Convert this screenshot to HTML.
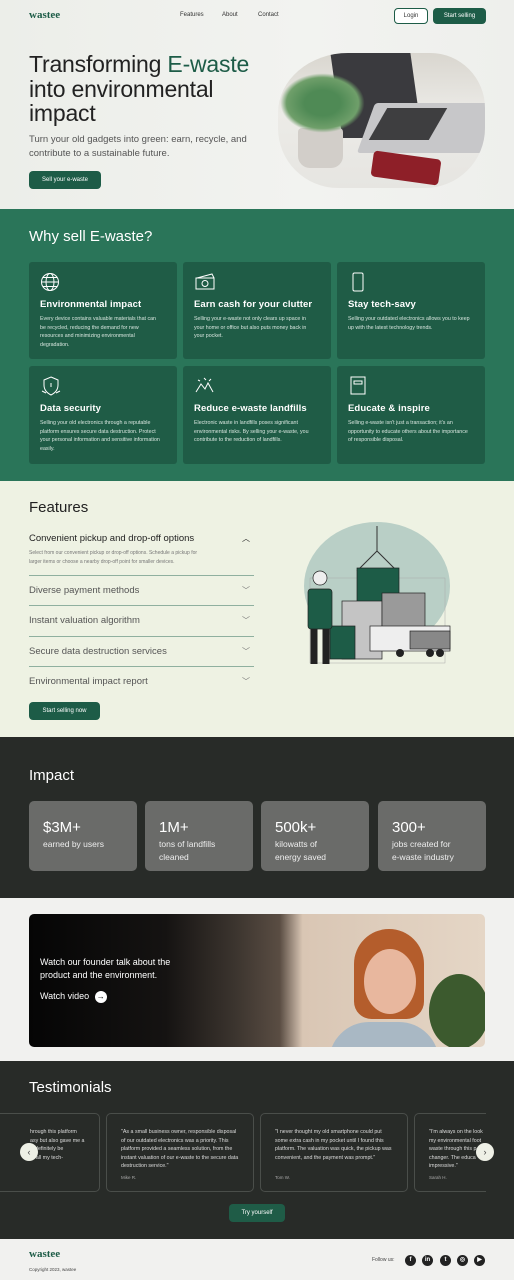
<!DOCTYPE html>
<html><head><meta charset="utf-8">
<style>
*{margin:0;padding:0;box-sizing:border-box}
body{width:514px;height:1280px;font-family:"Liberation Sans",sans-serif;background:#f1f1ef;color:#222;overflow:hidden}
.abs{position:absolute}
section{position:relative;overflow:hidden}
.btn{position:absolute;background:#1d5c47;color:#fff;border-radius:4px;font-size:6px;display:flex;align-items:center;justify-content:center}
.card{position:absolute;background:#1f5c46;border-radius:3px;color:#fff;padding:10px 11px}
.card h3{font-size:9.5px;font-weight:bold;margin-top:27px;letter-spacing:.1px}
.card p{font-size:5.3px;line-height:8.6px;color:#d8e6df;margin-top:5px;padding-right:4px}
.card svg{position:absolute;left:11px;top:10px}
.acc{position:absolute;left:29px;width:225px;font-size:9.5px;color:#555;border-top:1px solid #8fb09f}
.acc span{position:absolute;right:4px;font-size:8px;color:#777}
.stat{position:absolute;top:801px;width:108px;height:70px;background:#6a6b69;border-radius:5px;color:#fff;padding:13px 14px}
.stat b{font-size:15px;font-weight:normal;display:block}
.stat i{font-style:normal;font-size:8.5px;line-height:13px;display:block;color:#eee;margin-top:2px}
.tc{position:absolute;top:1113px;height:79px;border:1px solid #4a4e4a;border-radius:5px;font-size:5.3px;line-height:8.5px;color:#ddd;padding:14px 14px}
.tc .n{position:absolute;top:60px;font-size:4.5px;color:#aaa}
.soc{position:absolute;top:1255px;width:11px;height:11px;border-radius:50%;background:#222;color:#fff;font-size:6px;text-align:center;line-height:11px;font-weight:bold}
</style></head><body>
<section style="height:209px;background:linear-gradient(90deg,#eceee9,#f2f3f0 60%,#eeefec)">
<div class="abs" style="left:29px;top:9px;font-family:'Liberation Serif',serif;font-weight:bold;font-size:11px;color:#1d5c47">wastee</div>
<div class="abs" style="left:180px;top:12px;font-size:6px;color:#333">Features</div>
<div class="abs" style="left:222px;top:12px;font-size:6px;color:#333">About</div>
<div class="abs" style="left:258px;top:12px;font-size:6px;color:#333">Contact</div>
<div class="btn" style="left:394px;top:8px;width:34px;height:16px;background:#fff;color:#333;border:1px solid #1d5c47">Login</div>
<div class="btn" style="left:433px;top:8px;width:53px;height:16px">Start selling</div>
<div class="abs" style="left:29px;top:52px;font-size:23px;line-height:24.5px;color:#222;letter-spacing:-.2px">Transforming <span style="color:#1d5c47">E-waste</span><br>into environmental<br>impact</div>
<div class="abs" style="left:29px;top:133px;font-size:9.5px;line-height:14px;color:#555">Turn your old gadgets into green: earn, recycle, and<br>contribute to a sustainable future.</div>
<div class="btn" style="left:29px;top:171px;width:72px;height:18px">Sell your e-waste</div>
<div class="abs" style="left:278px;top:53px;width:207px;height:135px;border-radius:70px 55px 60px 60px/60px 55px 60px 60px;overflow:hidden;background:linear-gradient(180deg,#d9d6cf 0%,#ecebe7 45%,#e6e5e1 100%)">
 <div class="abs" style="left:58px;top:-5px;width:80px;height:90px;background:#3a3a3e;transform:skewX(8deg)"></div>
 <div class="abs" style="left:88px;top:50px;width:125px;height:50px;background:#c7c7c9;transform:skewX(-20deg);border-radius:3px"></div>
 <div class="abs" style="left:100px;top:55px;width:60px;height:32px;background:#3e3e40;transform:skewX(-30deg)"></div>
 <div class="abs" style="left:20px;top:75px;width:45px;height:40px;background:#d2cec9;border-radius:4px 4px 12px 12px"></div>
 <div class="abs" style="left:2px;top:20px;width:85px;height:60px;background:radial-gradient(ellipse,#4f8a55 30%,#6f9f6a 60%,transparent 70%)"></div>
 <div class="abs" style="left:94px;top:102px;width:68px;height:26px;background:#8e1f28;border-radius:4px;transform:rotate(8deg)"></div>
</div>
</section>
<section style="height:272px;background:#2a7559">
<div class="abs" style="left:29px;top:19px;font-size:15px;color:#fff">Why sell E-waste?</div>
<div class="card" style="left:29px;top:53px;width:148px;height:97px"><svg width="20" height="20" viewBox="0 0 20 20" fill="none" stroke="#fff" stroke-width="1"><circle cx="10" cy="10" r="8.5"/><ellipse cx="10" cy="10" rx="4" ry="8.5"/><path d="M1.5 10h17M3 5.5h14M3 14.5h14"/></svg><h3>Environmental impact</h3><p>Every device contains valuable materials that can be recycled, reducing the demand for new resources and minimizing environmental degradation.</p></div>
<div class="card" style="left:183px;top:53px;width:148px;height:97px"><svg width="22" height="20" viewBox="0 0 22 20" fill="none" stroke="#fff" stroke-width="1"><rect x="2" y="6" width="18" height="11"/><path d="M3 6l15-4 2 4"/><circle cx="11" cy="11.5" r="3"/></svg><h3>Earn cash for your clutter</h3><p>Selling your e-waste not only clears up space in your home or office but also puts money back in your pocket.</p></div>
<div class="card" style="left:337px;top:53px;width:148px;height:97px"><svg width="20" height="20" viewBox="0 0 20 20" fill="none" stroke="#fff" stroke-width="1"><rect x="5" y="1" width="10" height="18" rx="1.5"/></svg><h3>Stay tech-savy</h3><p>Selling your outdated electronics allows you to keep up with the latest technology trends.</p></div>
<div class="card" style="left:29px;top:157px;width:148px;height:98px"><svg width="22" height="20" viewBox="0 0 22 20" fill="none" stroke="#fff" stroke-width="1"><path d="M11 1l7 3v5c0 5-3 8-7 10-4-2-7-5-7-10V4z"/><path d="M11 7v4M2 15l4 2M20 15l-4 2"/></svg><h3>Data security</h3><p>Selling your old electronics through a reputable platform ensures secure data destruction. Protect your personal information and sensitive information easily.</p></div>
<div class="card" style="left:183px;top:157px;width:148px;height:98px"><svg width="22" height="20" viewBox="0 0 22 20" fill="none" stroke="#fff" stroke-width="1"><path d="M2 16l5-8 4 5 3-6 5 9M4 4l2 1M10 2l2 2M17 3l-2 2"/></svg><h3>Reduce e-waste landfills</h3><p>Electronic waste in landfills poses significant environmental risks. By selling your e-waste, you contribute to the reduction of landfills.</p></div>
<div class="card" style="left:337px;top:157px;width:148px;height:98px"><svg width="20" height="20" viewBox="0 0 20 20" fill="none" stroke="#fff" stroke-width="1"><rect x="3" y="1" width="14" height="17"/><path d="M6 5h8v3H6z"/></svg><h3>Educate &amp; inspire</h3><p>Selling e-waste isn't just a transaction; it's an opportunity to educate others about the importance of responsible disposal.</p></div>
</section>
<section style="height:256px;background:#eef2e3">
<div class="abs" style="left:29px;top:18px;font-size:15px;color:#222">Features</div>
<div class="abs" style="left:29px;top:52px;width:225px;font-size:9.5px;color:#222">Convenient pickup and drop-off options<span style="position:absolute;right:4px;font-size:8px">︿</span></div>
<div class="abs" style="left:29px;top:68px;font-size:5px;line-height:8.5px;color:#777">Select from our convenient pickup or drop-off options. Schedule a pickup for<br>larger items or choose a nearby drop-off point for smaller devices.</div>
<div class="acc" style="top:94px;height:30px;padding-top:9px">Diverse payment methods<span style="top:9px">﹀</span></div>
<div class="acc" style="top:124px;height:30px;padding-top:9px">Instant valuation algorithm<span style="top:9px">﹀</span></div>
<div class="acc" style="top:155px;height:30px;padding-top:9px">Secure data destruction services<span style="top:9px">﹀</span></div>
<div class="acc" style="top:185px;height:30px;padding-top:9px">Environmental impact report<span style="top:9px">﹀</span></div>
<div class="btn" style="left:29px;top:221px;width:71px;height:18px">Start selling now</div>
<svg class="abs" style="left:300px;top:40px" width="155" height="150" viewBox="0 0 155 150">
<ellipse cx="77" cy="65" rx="73" ry="64" fill="#b9cfc6"/>
<rect x="10" y="57" width="135" height="85" fill="none" stroke="#aaa" stroke-width=".5"/>
<path d="M77 5v25M77 30l-20 20M77 30l20 20" stroke="#333" stroke-width="1" fill="none"/>
<rect x="57" y="47" width="42" height="35" fill="#1d5c47" stroke="#222" stroke-width=".7"/>
<rect x="42" y="80" width="40" height="58" fill="#c4c4c4" stroke="#222" stroke-width=".7"/>
<rect x="82" y="72" width="43" height="40" fill="#9a9a9a" stroke="#222" stroke-width=".7"/>
<rect x="30" y="105" width="25" height="33" fill="#1d5c47" stroke="#222" stroke-width=".7"/>
<rect x="70" y="105" width="80" height="25" fill="#eee" stroke="#222" stroke-width=".7"/>
<rect x="110" y="110" width="40" height="18" fill="#888" stroke="#222" stroke-width=".7"/>
<circle cx="100" cy="132" r="4" fill="#222"/><circle cx="130" cy="132" r="4" fill="#222"/><circle cx="140" cy="132" r="4" fill="#222"/>
<rect x="8" y="68" width="24" height="40" rx="3" fill="#1d5c47" stroke="#222" stroke-width=".7"/>
<path d="M14 108v35M26 108v35" stroke="#222" stroke-width="7"/>
<circle cx="20" cy="57" r="7" fill="#eee" stroke="#222" stroke-width=".7"/>
</svg>
</section>
<section style="height:161px;background:#282b28">
<div class="abs" style="left:29px;top:30px;font-size:15px;color:#fff">Impact</div>
<div class="stat" style="left:29px;top:64px">&nbsp;<b style="margin-top:-13px">$3M+</b><i>earned by users</i></div>
<div class="stat" style="left:145px;top:64px">&nbsp;<b style="margin-top:-13px">1M+</b><i>tons of landfills<br>cleaned</i></div>
<div class="stat" style="left:261px;top:64px">&nbsp;<b style="margin-top:-13px">500k+</b><i>kilowatts of<br>energy saved</i></div>
<div class="stat" style="left:378px;top:64px">&nbsp;<b style="margin-top:-13px">300+</b><i>jobs created for<br>e-waste industry</i></div>
</section>
<section style="height:163px;background:#f1f1ef">
<div class="abs" style="left:29px;top:16px;width:456px;height:133px;border-radius:5px;overflow:hidden;background:linear-gradient(90deg,#050505 0%,#151312 30%,#3b342e 45%,#5a4d43 55%,#d9c6b4 60%,#e5d6c6 100%)">
 <div class="abs" style="left:325px;top:15px;width:70px;height:90px;border-radius:40px 40px 20px 20px;background:#b45d2c"></div>
 <div class="abs" style="left:335px;top:35px;width:52px;height:65px;border-radius:50%;background:#e8b79e"></div>
 <div class="abs" style="left:300px;top:108px;width:110px;height:40px;border-radius:40px 40px 0 0;background:#a9b8c4"></div>
 <div class="abs" style="left:400px;top:60px;width:60px;height:75px;border-radius:50%;background:#3c5a2e"></div>
 <div class="abs" style="left:11px;top:42px;font-size:9px;line-height:13px;color:#fff">Watch our founder talk about the<br>product and the environment.</div>
 <div class="abs" style="left:11px;top:77px;font-size:9px;color:#fff">Watch video <span style="display:inline-block;width:12px;height:12px;border-radius:50%;background:#fff;color:#000;font-size:8px;text-align:center;line-height:12px;margin-left:3px">→</span></div>
</div>
</section>
<section style="height:178px;background:#282b28">
<div class="abs" style="left:29px;top:18px;font-size:15px;color:#fff">Testimonials</div>
</section>
<div class="tc" style="left:-50px;width:150px;padding-left:79px">hrough this platform<br>asy but also gave me a<br>ill definitely be<br>to all my tech-</div>
<div class="tc" style="left:106px;width:148px">"As a small business owner, responsible disposal of our outdated electronics was a priority. This platform provided a seamless solution, from the instant valuation of our e-waste to the secure data destruction service."<div class="n">Mike R.</div></div>
<div class="tc" style="left:260px;width:148px">"I never thought my old smartphone could put some extra cash in my pocket until I found this platform. The valuation was quick, the pickup was convenient, and the payment was prompt."<div class="n">Tom W.</div></div>
<div class="tc" style="left:414px;border-right:none;border-radius:5px 0 0 5px;white-space:nowrap;overflow:hidden;width:72px">"I'm always on the look<br>my environmental foot<br>waste through this p<br>changer. The educa<br>impressive."<div class="n">Sarah H.</div></div>
<div class="abs" style="left:20px;top:1143px;width:18px;height:18px;border-radius:50%;background:#eef0e6;color:#444;font-size:9px;text-align:center;line-height:18px">‹</div>
<div class="abs" style="left:476px;top:1143px;width:18px;height:18px;border-radius:50%;background:#eef0e6;color:#444;font-size:9px;text-align:center;line-height:18px">›</div>
<div class="btn" style="left:229px;top:1204px;width:56px;height:18px;background:#1f5c47;font-size:6px">Try yourself</div>
<div class="abs" style="left:29px;top:1248px;font-family:'Liberation Serif',serif;font-weight:bold;font-size:11px;color:#1d5c47">wastee</div>
<div class="abs" style="left:29px;top:1267px;font-size:4.5px;color:#444">Copyright 2023, wastee</div>
<div class="abs" style="left:372px;top:1257px;font-size:5px;color:#444">Follow us:</div>
<div class="soc" style="left:405px">f</div><div class="soc" style="left:422px">in</div><div class="soc" style="left:440px">t</div><div class="soc" style="left:457px">◎</div><div class="soc" style="left:474px">▶</div>
</body></html>
